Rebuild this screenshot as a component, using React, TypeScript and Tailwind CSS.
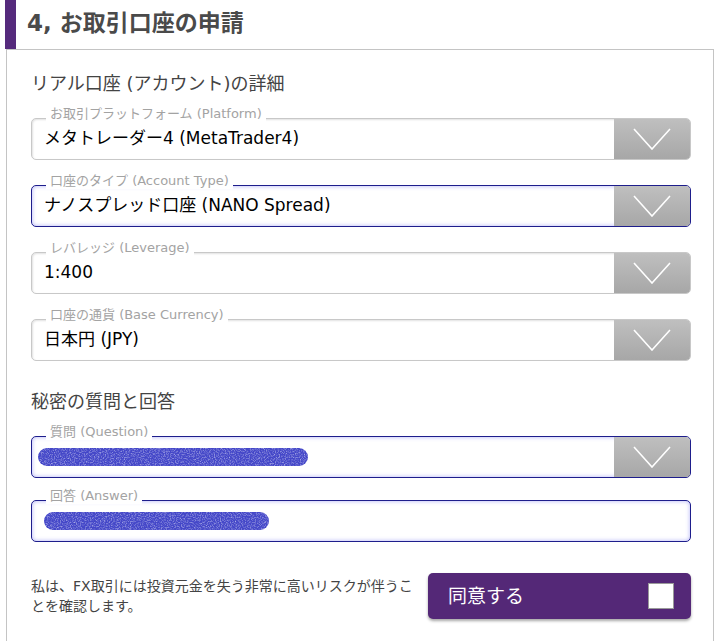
import React from "react"

const Chevron = () => (
  <svg width="38" height="22" viewBox="0 0 38 22" fill="none">
    <polyline points="1,1 19,21 37,1" stroke="white" strokeWidth="1.6" />
  </svg>
)

const Scribble = ({ id, w }: { id: string; w: number }) => (
  <svg width={w} height="22" viewBox={`0 0 ${w} 22`}>
    <defs>
      <filter id={id} x="0" y="0" width="100%" height="100%">
        <feTurbulence type="fractalNoise" baseFrequency="0.8" numOctaves="2" seed="3" />
        <feColorMatrix type="matrix" values="0 0 0 0 1  0 0 0 0 1  0 0 0 0 1  0 0 0 -2.2 1.25" />
        <feComposite in2="SourceGraphic" operator="in" />
      </filter>
    </defs>
    <rect x="0" y="2" width={w} height="18" rx="9" fill="#4447c8" />
    <rect x="0" y="2" width={w} height="18" rx="9" fill="#4447c8" filter={`url(#${id})`} opacity="0.55" />
  </svg>
)

type FieldProps = {
  label: string
  focused?: boolean
  select?: boolean
  children: React.ReactNode
}

const Field = ({ label, focused, select = true, children }: FieldProps) => {
  const border = focused
    ? "border-[#1e1e8c] shadow-[inset_0_0_4px_rgba(110,110,240,0.55)]"
    : "border-[#c8c8c8] shadow-[inset_1px_1px_2px_rgba(0,0,0,0.12)]"
  return (
    <div className={`relative flex h-[42px] w-[660px] items-center rounded-[5px] border bg-white ${border}`}>
      <span className="absolute left-[14px] top-[-13px] bg-white px-[4px] text-[13px] leading-[16px] text-[#a3a3a3]">
        {label}
      </span>
      <div className="flex-1 pl-[12px] text-[17px] text-black">{children}</div>
      {select && (
        <div className="flex h-full w-[76px] items-center justify-center rounded-r-[4px] bg-gradient-to-b from-[#bfbfbf] to-[#a7a7a7]">
          <Chevron />
        </div>
      )}
    </div>
  )
}

export default function App() {
  return (
    <div className="h-[641px] w-[723px] overflow-hidden bg-white font-['DejaVu_Sans','Noto_Sans_CJK_JP',sans-serif]">
      <div className="flex h-[49px] items-center">
        <div className="ml-[5px] h-[49px] w-[11px] bg-[#552a7c]" />
        <h2 className="pb-[2px] pl-[11px] text-[23px] font-bold text-[#4a4a4a]">4, お取引口座の申請</h2>
      </div>

      <section className="ml-[6px] h-[600px] w-[708px] border border-b-0 border-[#c4c4c4] pl-[24px] pt-[21px]">
        <h3 className="text-[18px] leading-[26px] text-[#444]">リアル口座 (アカウント)の詳細</h3>

        <div className="mt-[21px] flex flex-col gap-[25px]">
          <Field label="お取引プラットフォーム (Platform)">メタトレーダー4 (MetaTrader4)</Field>
          <Field label="口座のタイプ (Account Type)" focused>
            ナノスプレッド口座 (NANO Spread)
          </Field>
          <Field label="レバレッジ (Leverage)">1:400</Field>
          <Field label="口座の通貨 (Base Currency)">日本円 (JPY)</Field>
        </div>

        <h3 className="mt-[28px] text-[18px] leading-[26px] text-[#444]">秘密の質問と回答</h3>

        <div className="mt-[21px] flex flex-col gap-[22px]">
          <Field label="質問 (Question)" focused>
            <div className="-ml-[6px] flex">
              <Scribble id="q" w={270} />
            </div>
          </Field>
          <Field label="回答 (Answer)" focused select={false}>
            <Scribble id="a" w={225} />
          </Field>
        </div>

        <div className="mt-[31px] flex w-[660px] items-center justify-between">
          <p className="w-[386px] text-[14px] leading-[20px] text-[#444]">
            私は、FX取引には投資元金を失う非常に高いリスクが伴うことを確認します。
          </p>
          <button className="flex h-[46px] w-[263px] items-center justify-between rounded-[5px] bg-[#542877] pl-[20px] pr-[17px] shadow-[0_2px_3px_rgba(0,0,0,0.35)]">
            <span className="text-[19px] text-white">同意する</span>
            <span className="h-[26px] w-[26px] border border-[#9a9a9a] bg-white" />
          </button>
        </div>
      </section>
    </div>
  )
}
